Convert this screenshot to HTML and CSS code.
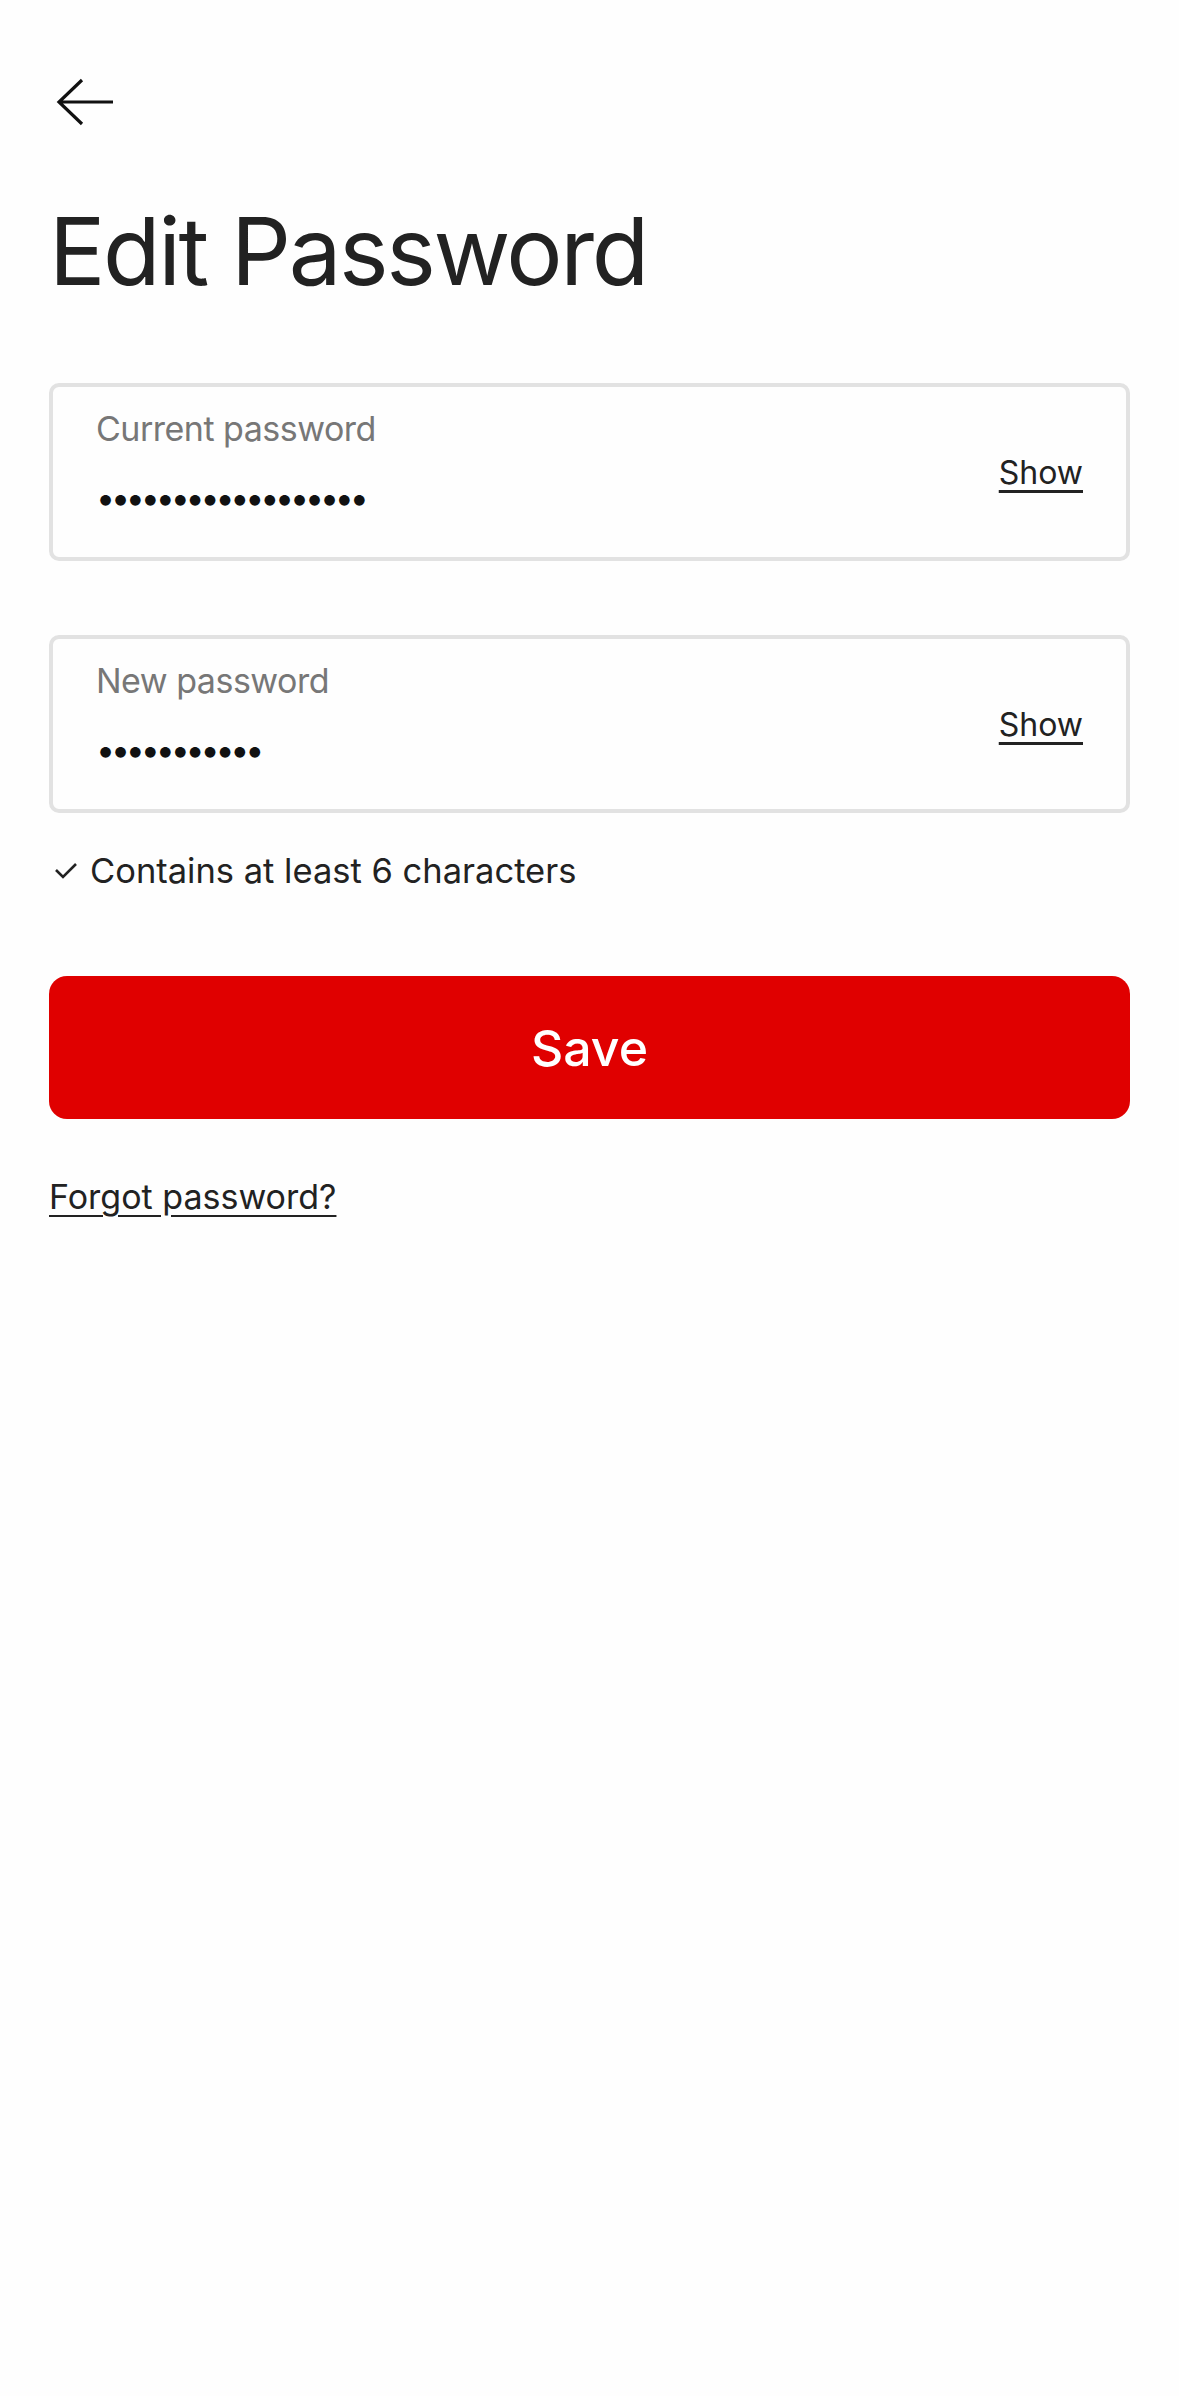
FILE: index.html
```html
<!DOCTYPE html>
<html lang="en">
  <head>
    <meta charset="UTF-8" />
    <meta name="viewport" content="width=device-width, initial-scale=1.0" />
    <title>Edit Password</title>
    <link rel="stylesheet" href="styles.css">
  </head>
  <body>
    <div class="page">
      <button class="back-button" type="button" aria-label="Back">
        <svg width="60" height="48" viewBox="0 0 60 48">
          <path d="M4 24 H58 M27 2 L4 24 L27 46" fill="none" stroke="#111" stroke-width="3.2" />
        </svg>
      </button>

      <h1>Edit Password</h1>

      <form id="passwordForm">
        <div class="field">
          <div class="field-body">
            <label for="currentPassword">Current password</label>
            <span class="dots" id="currentPassword">••••••••••••••••••</span>
          </div>
          <a href="#" class="show-link">Show</a>
        </div>

        <div class="field field-new">
          <div class="field-body">
            <label for="newPassword">New password</label>
            <span class="dots" id="newPassword">•••••••••••</span>
          </div>
          <a href="#" class="show-link">Show</a>
        </div>

        <div class="rule">
          <svg width="26" height="20" viewBox="0 0 26 20">
            <path d="M3 9 L10 16 L23 3" fill="none" stroke="#222" stroke-width="2.6" />
          </svg>
          <span>Contains at least 6 characters</span>
        </div>

        <button type="button" class="save-button">Save</button>
      </form>

      <a href="#" class="forgot-link">Forgot password?</a>
    </div>
  </body>
</html>
```

FILE: styles.css
```css
body {
  font-family: "Inter", "Liberation Sans", sans-serif;
  background-color: #fefefe;
  color: #222;
  margin: 0;
}

.page {
  padding: 0 49px;
}

.back-button {
  display: block;
  background: none;
  border: none;
  padding: 0;
  margin: 78px 0 0 6px;
  cursor: pointer;
}

.back-button svg {
  display: block;
}

h1 {
  font-size: 94px;
  font-weight: 400;
  letter-spacing: -2.4px;
  line-height: 1;
  margin: 78px 0 0 0;
  color: #222;
}

form {
  margin-top: 85px;
}

.field {
  display: flex;
  align-items: flex-start;
  justify-content: space-between;
  height: 178px;
  box-sizing: border-box;
  border: 4px solid #e2e2e2;
  border-radius: 10px;
  padding: 0 43px;
}

.field-new {
  margin-top: 74px;
}

.field-body {
  display: flex;
  flex-direction: column;
  padding-top: 21px;
}

label {
  font-size: 34px;
  color: #777;
  letter-spacing: -0.5px;
}

.dots {
  font-size: 34px;
  letter-spacing: -4.2px;
  color: #111;
  margin-top: 28px;
}

.show-link {
  align-self: center;
  font-size: 32px;
  color: #222;
  text-decoration: underline;
  text-underline-offset: 6px;
}

.rule {
  display: flex;
  align-items: center;
  gap: 11px;
  margin-top: 37px;
  margin-left: 4px;
  font-size: 34.5px;
}

.save-button {
  display: block;
  width: 100%;
  height: 143px;
  margin-top: 85px;
  background-color: #e00000;
  color: white;
  border: none;
  border-radius: 18px;
  font-family: inherit;
  font-size: 50px;
  font-weight: 500;
  cursor: pointer;
}

.forgot-link {
  display: inline-block;
  margin-top: 57px;
  font-size: 34px;
  color: #222;
  text-decoration: underline;
  text-underline-offset: 6px;
}
```
